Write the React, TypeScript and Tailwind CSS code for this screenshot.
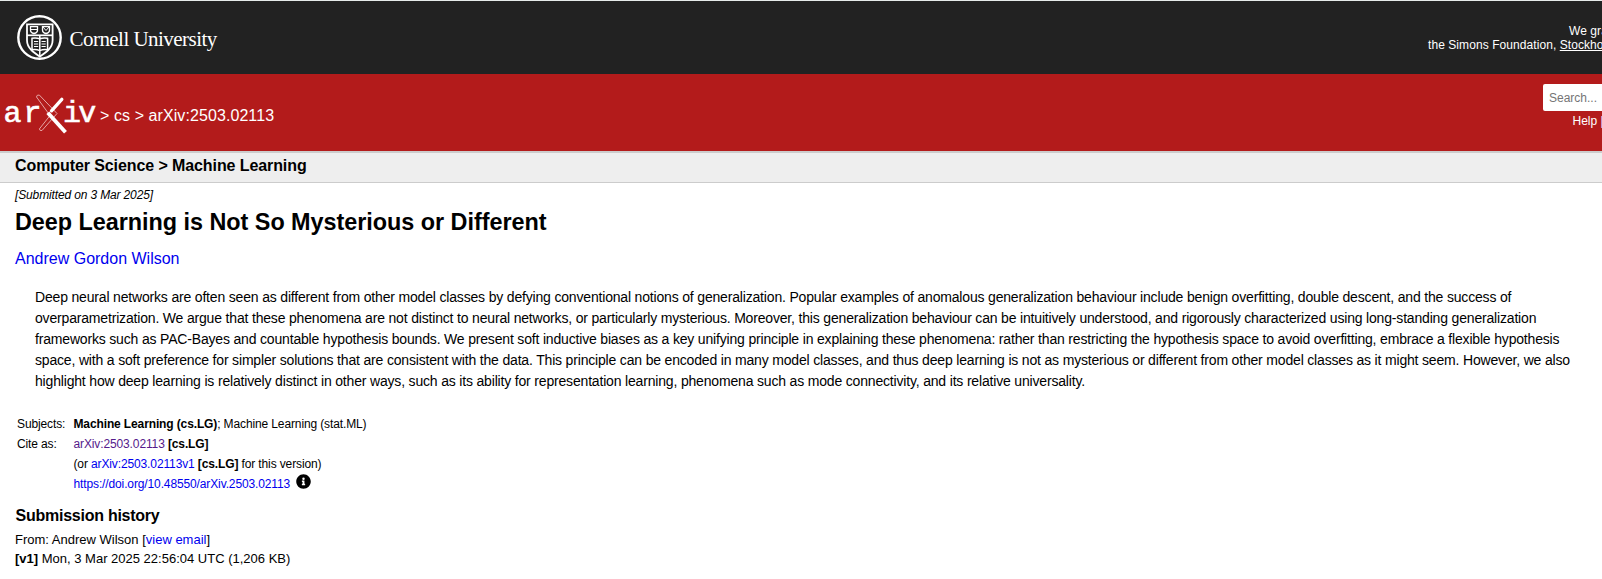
import { ReactNode } from "react";

function Link({ children, visited }: { children: ReactNode; visited?: boolean }) {
  return <a className={visited ? "text-[#551a8b]" : "text-[#0000ee]"}>{children}</a>;
}

function Seal() {
  return (
    <svg className="h-[46px] w-[46px] shrink-0" viewBox="0 0 46 46" fill="none" stroke="#fff">
      <circle cx="22.5" cy="22.5" r="21.2" strokeWidth="2.4" />
      <path d="M10 9.3h25.600v16c0 8-7 12.500-12.800 16.300c-5.800-3.800-12.800-8.300-12.800-16.300z" strokeWidth="1.800" />
      <path d="M10 20.300h25.600" strokeWidth="1.700" />
      <path d="M13.500 11.700h7v3.500c0 2-2 3-3.500 3.300c-1.500-.3-3.500-1.300-3.500-3.300zM25.500 11.700h7v3.500c0 2-2 3-3.500 3.300c-1.500-.3-3.500-1.300-3.500-3.300z" strokeWidth="1.300" />
      <path d="M14 14.500h6M26 12l3 3.500l3-3.500" strokeWidth="1" />
      <path d="M15 23.300q4-.8 7.800.5q3.800-1.300 7.800-.5v11.500q-4-.8-7.800.8q-3.800-1.600-7.800-.8zM22.800 21v20" strokeWidth="1.500" />
      <path d="M17 26.500h4.200M17 29h4.200M17 31.500h4.200M24.500 26.500h4.200M24.500 29h4.200M24.500 31.500h4.200" strokeWidth="1.100" />
    </svg>
  );
}

function ArxivLogo() {
  return (
    <svg className="h-[42px] w-[92px] shrink-0" viewBox="4 93 92 42">
      <g fill="#fff" stroke="#fff" strokeWidth="0.6" fontFamily="Liberation Mono, monospace" fontSize="30">
        <text x="3.500 23.500" y="122">ar</text>
        <text x="63 78.300" y="122">iv</text>
      </g>
      <path d="M36.500 97q0-2.300 2.800-2L57 113.500L42 130.500q-2.300.7-2.600-1.600L50 115.500z" stroke="#e6a5a5" strokeWidth="1" fill="none" />
      <path d="M61.800 99.300L51.500 110.800" stroke="#fff" strokeWidth="3.300" strokeLinecap="round" />
      <path d="M47.800 112.800L65.500 132.300" stroke="#fff" strokeWidth="3.900" />
    </svg>
  );
}

export default function App() {
  return (
    <div className="h-[579px] w-full overflow-hidden bg-white font-['Liberation_Sans',Arial,sans-serif] whitespace-nowrap text-black">
      <header>
        <div className="flex h-[74px] justify-between border-t border-[#e6ebea] bg-[#222]">
          <div className="flex pt-[14px] pl-[17px] text-white">
            <Seal />
            <span className="mt-[7px] ml-[6.5px] font-['Liberation_Serif',serif] text-[21px] leading-[34px] tracking-[-0.54px]">Cornell University</span>
          </div>
          <div className="w-[174px] pt-[23px] text-[12px] leading-[14px] tracking-[0.07px] text-white">
            <p className="pl-[141px]">We gratefully acknowledge</p>
            <p>the Simons Foundation, <a className="underline">Stockholm University</a></p>
          </div>
        </div>
        <div className="flex h-[77px] justify-between bg-[#b31b1b] text-white">
          <div className="flex pt-[19px] pl-[4px]">
            <ArxivLogo />
            <h1 className="mt-[12px] ml-[4px] text-[16px] leading-[22px] tracking-[0.08px]">&gt; cs &gt; arXiv:2503.02113</h1>
          </div>
          <div className="w-[59px] overflow-hidden pt-[10px]">
            <div className="h-[27px] w-[150px] rounded-[2px] bg-white pl-[6px] text-[12px] leading-[28px] text-[#757575]">Search...</div>
            <p className="pt-[3px] pl-[29.500px] text-[12px] leading-[14px]">Help | Advanced Search</p>
          </div>
        </div>
      </header>
      <div className="h-[32px] border-t-2 border-b border-[#ccc] bg-[#eee] pl-[15px] text-[16px] leading-[25px] font-bold tracking-[-0.09px]">
        Computer Science &gt; Machine Learning
      </div>
      <main className="pl-[15px]">
        <p className="pt-[5px] text-[12px] leading-[14px] tracking-[-0.14px] italic">[Submitted on 3 Mar 2025]</p>
        <h1 className="mt-[6px] text-[23.4px] leading-[28px] font-bold tracking-[-0.03px]">Deep Learning is Not So Mysterious or Different</h1>
        <p className="mt-[13px] text-[16px] leading-[20px]"><Link>Andrew Gordon Wilson</Link></p>
        <div className="mt-[18px] pl-[20px] text-[14px] leading-[21px] tracking-[-0.176px]">
          <p>Deep neural networks are often seen as different from other model classes by defying conventional notions of generalization. Popular examples of anomalous generalization behaviour include benign overfitting, double descent, and the success of</p>
          <p>overparametrization. We argue that these phenomena are not distinct to neural networks, or particularly mysterious. Moreover, this generalization behaviour can be intuitively understood, and rigorously characterized using long-standing generalization</p>
          <p>frameworks such as PAC-Bayes and countable hypothesis bounds. We present soft inductive biases as a key unifying principle in explaining these phenomena: rather than restricting the hypothesis space to avoid overfitting, embrace a flexible hypothesis</p>
          <p>space, with a soft preference for simpler solutions that are consistent with the data. This principle can be encoded in many model classes, and thus deep learning is not as mysterious or different from other model classes as it might seem. However, we also</p>
          <p>highlight how deep learning is relatively distinct in other ways, such as its ability for representation learning, phenomena such as mode connectivity, and its relative universality.</p>
        </div>
        <div className="mt-[22px] grid grid-cols-[56.5px_1fr] pl-[2px] text-[12px] leading-[20px] tracking-[-0.125px]">
          <span>Subjects:</span>
          <span><b>Machine Learning (cs.LG)</b>; Machine Learning (stat.ML)</span>
          <span>Cite as:</span>
          <span><Link visited>arXiv:2503.02113</Link> <b>[cs.LG]</b></span>
          <span className="col-start-2">(or <Link>arXiv:2503.02113v1</Link> <b>[cs.LG]</b> for this version)</span>
          <span className="col-start-2 flex">
            <Link>https://doi.org/10.48550/arXiv.2503.02113</Link>
            <svg className="ml-[6px] h-[15px] w-[15px]" viewBox="0 0 512 512">
              <path d="M256 8C119 8 8 119 8 256s111 248 248 248 248-111 248-248S393 8 256 8zm0 110a42 42 0 1 1 0 84 42 42 0 1 1 0-84zm56 254c0 7-5 12-12 12h-88c-7 0-12-5-12-12v-24c0-7 5-12 12-12h12v-64h-12c-7 0-12-5-12-12v-24c0-7 5-12 12-12h64c7 0 12 5 12 12v100h12c7 0 12 5 12 12z" />
            </svg>
          </span>
        </div>
        <h2 className="mt-[10px] pl-[0.5px] text-[16px] leading-[24px] font-bold tracking-[-0.25px]">Submission history</h2>
        <div className="mt-[2px] text-[13px] leading-[19px]">
          <p>From: Andrew Wilson [<Link>view email</Link>]</p>
          <p><b>[v1]</b> Mon, 3 Mar 2025 22:56:04 UTC (1,206 KB)</p>
        </div>
      </main>
    </div>
  );
}
